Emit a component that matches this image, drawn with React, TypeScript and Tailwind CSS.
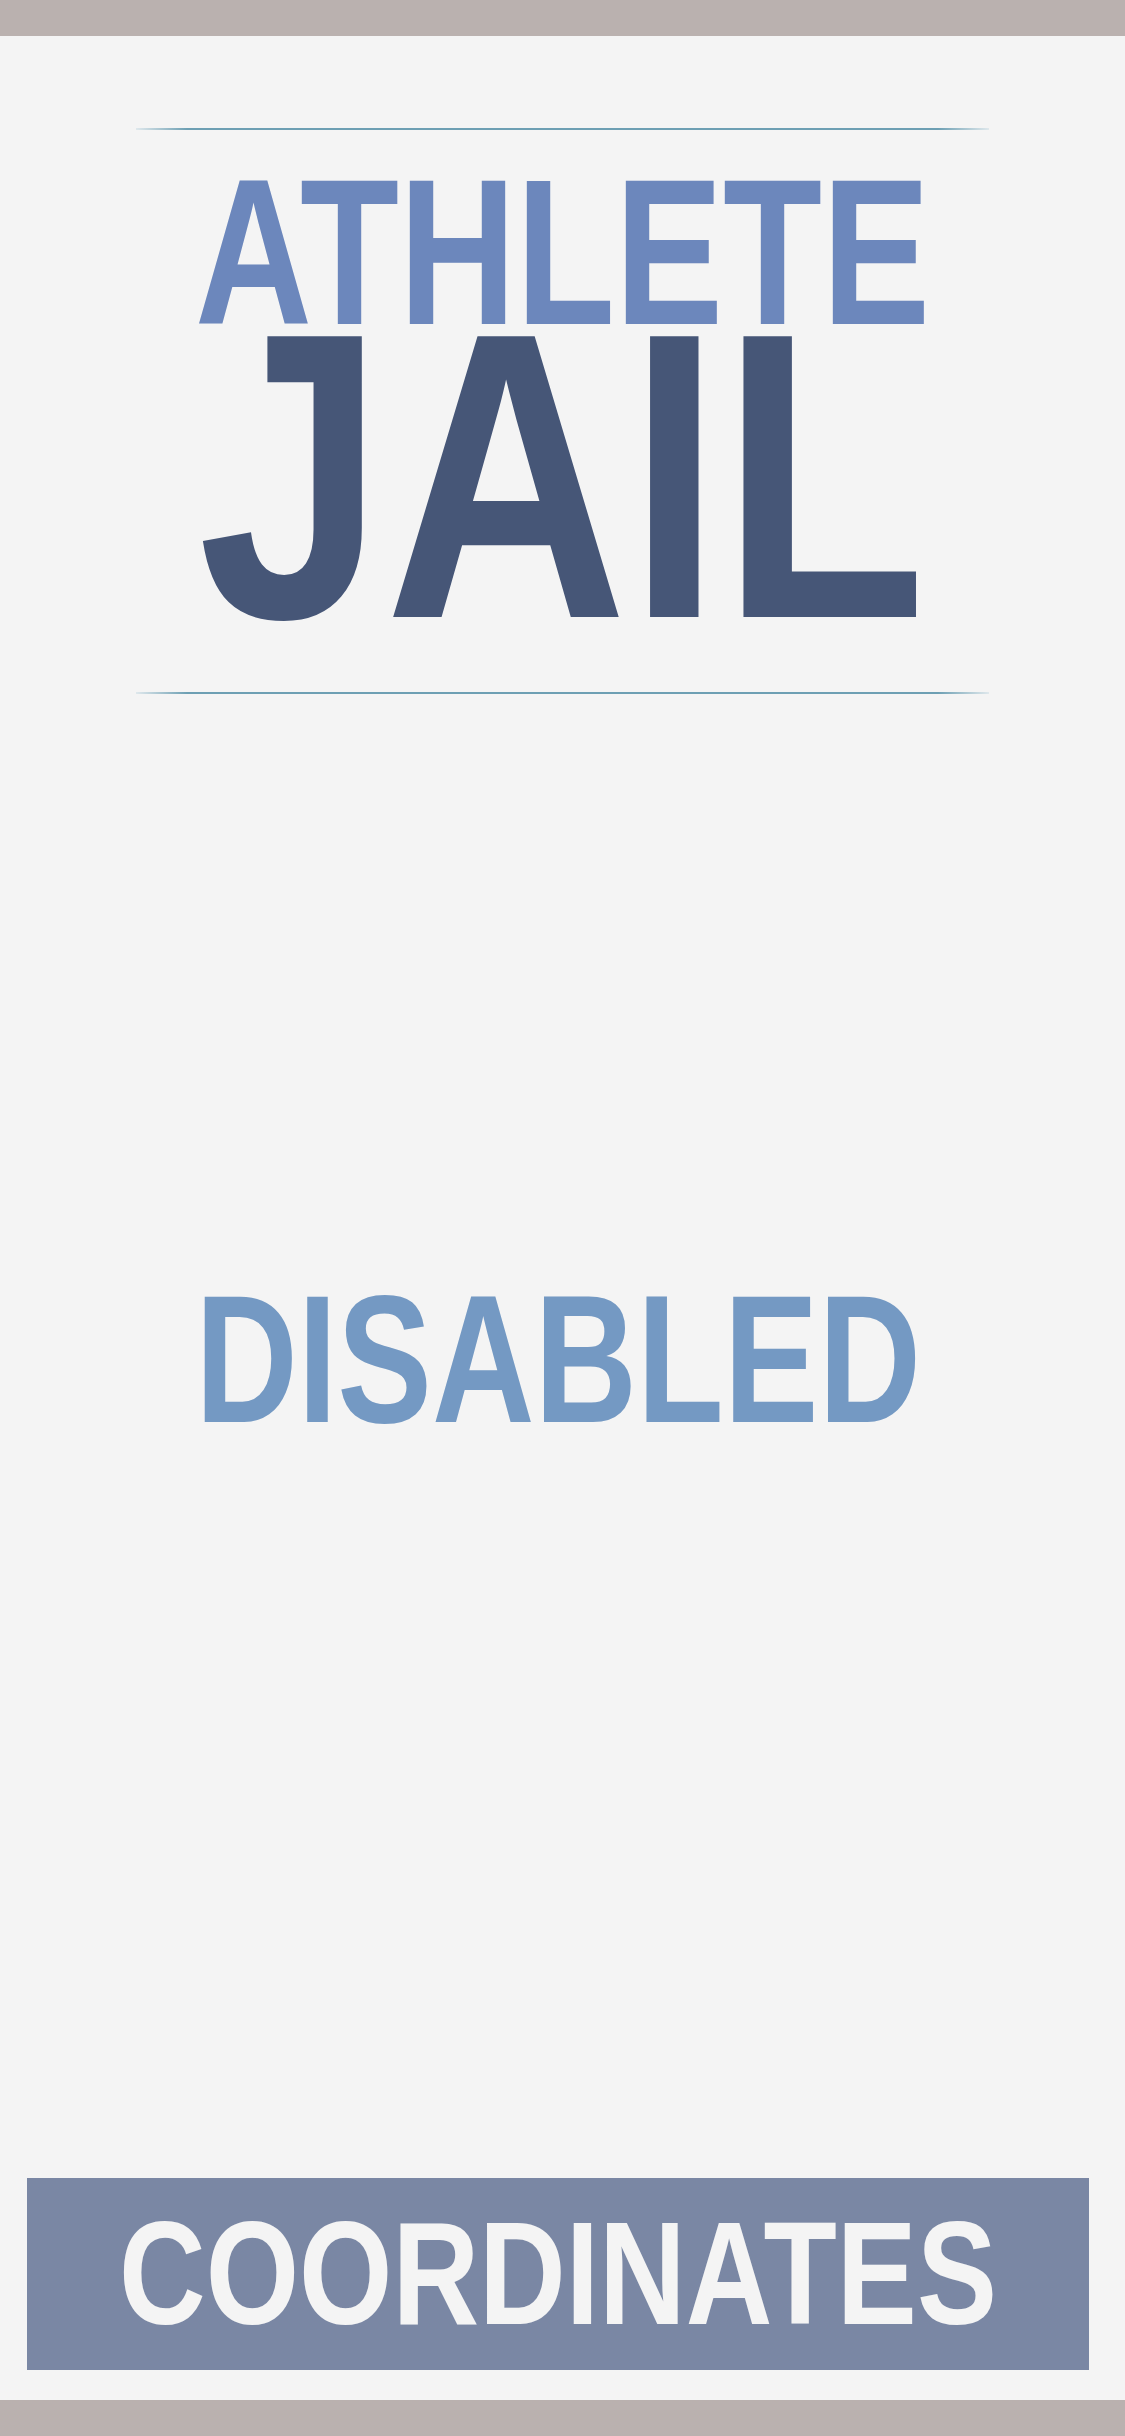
import React from "react";

const Line = ({ className = "" }: { className?: string }) => (
  <div
    className={
      "mx-[136px] h-[2px] bg-[linear-gradient(to_right,#dfe8ec,#6d9fb3_6%,#6d9fb3_94%,#dfe8ec)] " +
      className
    }
  />
);

export default function App() {
  return (
    <div className="flex h-[2436px] w-[1125px] flex-col overflow-hidden bg-[#f4f4f4] font-['Liberation_Sans',Arial,sans-serif] font-bold">
      <div className="h-[36px] shrink-0 bg-[#bab1af]" />

      <Line className="mt-[92px]" />

      <div className="mt-[45px] flex h-[155px] justify-center text-[207px] leading-[155px] text-[#6c87bc]">
        <span className="inline-block origin-center scale-x-[0.783] whitespace-nowrap">ATHLETE</span>
      </div>

      <div className="flex h-[292px] justify-center text-[408px] leading-[292px] text-[#465677]">
        <span className="inline-block origin-center scale-x-[0.824] whitespace-nowrap">JAIL</span>
      </div>

      <Line className="mt-[70px]" />

      <div className="mt-[574px] flex h-[182px] justify-center pr-[8px] text-[182px] leading-[182px] text-[#7499c3]">
        <span className="inline-block origin-center scale-x-[0.78] whitespace-nowrap">DISABLED</span>
      </div>

      <div className="mb-[30px] ml-[27px] mr-[36px] mt-auto flex h-[192px] items-center justify-center bg-[#7a87a4] text-[146px] leading-[146px] text-[#f4f4f4]">
        <span className="inline-block origin-center scale-x-[0.822] whitespace-nowrap">COORDINATES</span>
      </div>

      <div className="h-[36px] shrink-0 bg-[#bab1af]" />
    </div>
  );
}
